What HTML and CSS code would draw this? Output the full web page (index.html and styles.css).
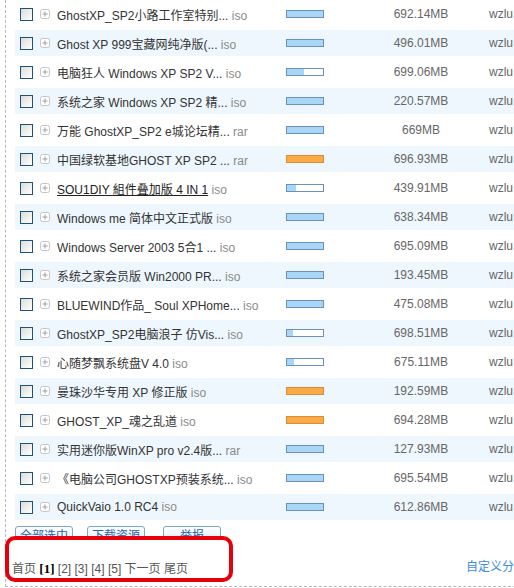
FILE: index.html
```html
<!DOCTYPE html>
<html>
<head>
  <meta charset="utf-8">
  <title>资源列表</title>
  <link rel="stylesheet" href="styles.css">
</head>
<body>
  <div class="panel">
    <ul class="file-list">
      <li class="file-row">
        <span class="check"></span>
        <svg class="expand" width="10" height="10" viewBox="0 0 10 10"><rect x="0.5" y="0.5" width="9" height="9" rx="2" fill="#fff" stroke="#c4c4c4"/><path d="M5 2.5v5M2.5 5h5" stroke="#a0a0a0"/></svg>
        <span class="name">GhostXP_SP2小路工作室特别... <em>iso</em></span>
        <span class="bar"><span class="fill" style="width:100%"></span></span>
        <span class="size">692.14MB</span>
        <span class="user">wzlu</span>
      </li>
      <li class="file-row">
        <span class="check"></span>
        <svg class="expand" width="10" height="10" viewBox="0 0 10 10"><rect x="0.5" y="0.5" width="9" height="9" rx="2" fill="#fff" stroke="#c4c4c4"/><path d="M5 2.5v5M2.5 5h5" stroke="#a0a0a0"/></svg>
        <span class="name">Ghost XP 999宝藏网纯净版(... <em>iso</em></span>
        <span class="bar"><span class="fill" style="width:100%"></span></span>
        <span class="size">496.01MB</span>
        <span class="user">wzlu</span>
      </li>
      <li class="file-row">
        <span class="check"></span>
        <svg class="expand" width="10" height="10" viewBox="0 0 10 10"><rect x="0.5" y="0.5" width="9" height="9" rx="2" fill="#fff" stroke="#c4c4c4"/><path d="M5 2.5v5M2.5 5h5" stroke="#a0a0a0"/></svg>
        <span class="name">电脑狂人 Windows XP SP2 V... <em>iso</em></span>
        <span class="bar"><span class="fill" style="width:46%"></span></span>
        <span class="size">699.06MB</span>
        <span class="user">wzlu</span>
      </li>
      <li class="file-row">
        <span class="check"></span>
        <svg class="expand" width="10" height="10" viewBox="0 0 10 10"><rect x="0.5" y="0.5" width="9" height="9" rx="2" fill="#fff" stroke="#c4c4c4"/><path d="M5 2.5v5M2.5 5h5" stroke="#a0a0a0"/></svg>
        <span class="name">系统之家 Windows XP SP2 精... <em>iso</em></span>
        <span class="bar"><span class="fill" style="width:100%"></span></span>
        <span class="size">220.57MB</span>
        <span class="user">wzlu</span>
      </li>
      <li class="file-row">
        <span class="check"></span>
        <svg class="expand" width="10" height="10" viewBox="0 0 10 10"><rect x="0.5" y="0.5" width="9" height="9" rx="2" fill="#fff" stroke="#c4c4c4"/><path d="M5 2.5v5M2.5 5h5" stroke="#a0a0a0"/></svg>
        <span class="name">万能 GhostXP_SP2 e城论坛精... <em>rar</em></span>
        <span class="bar"><span class="fill" style="width:100%"></span></span>
        <span class="size">669MB</span>
        <span class="user">wzlu</span>
      </li>
      <li class="file-row">
        <span class="check"></span>
        <svg class="expand" width="10" height="10" viewBox="0 0 10 10"><rect x="0.5" y="0.5" width="9" height="9" rx="2" fill="#fff" stroke="#c4c4c4"/><path d="M5 2.5v5M2.5 5h5" stroke="#a0a0a0"/></svg>
        <span class="name">中国绿软基地GHOST XP SP2 ... <em>rar</em></span>
        <span class="bar hot"><span class="fill" style="width:100%"></span></span>
        <span class="size">696.93MB</span>
        <span class="user">wzlu</span>
      </li>
      <li class="file-row">
        <span class="check"></span>
        <svg class="expand" width="10" height="10" viewBox="0 0 10 10"><rect x="0.5" y="0.5" width="9" height="9" rx="2" fill="#fff" stroke="#c4c4c4"/><path d="M5 2.5v5M2.5 5h5" stroke="#a0a0a0"/></svg>
        <span class="name"><a href="#">SOU1DIY 組件叠加版 4 IN 1</a> <em>iso</em></span>
        <span class="bar"><span class="fill" style="width:24%"></span></span>
        <span class="size">439.91MB</span>
        <span class="user">wzlu</span>
      </li>
      <li class="file-row">
        <span class="check"></span>
        <svg class="expand" width="10" height="10" viewBox="0 0 10 10"><rect x="0.5" y="0.5" width="9" height="9" rx="2" fill="#fff" stroke="#c4c4c4"/><path d="M5 2.5v5M2.5 5h5" stroke="#a0a0a0"/></svg>
        <span class="name">Windows me 简体中文正式版 <em>iso</em></span>
        <span class="bar"><span class="fill" style="width:100%"></span></span>
        <span class="size">638.34MB</span>
        <span class="user">wzlu</span>
      </li>
      <li class="file-row">
        <span class="check"></span>
        <svg class="expand" width="10" height="10" viewBox="0 0 10 10"><rect x="0.5" y="0.5" width="9" height="9" rx="2" fill="#fff" stroke="#c4c4c4"/><path d="M5 2.5v5M2.5 5h5" stroke="#a0a0a0"/></svg>
        <span class="name">Windows Server 2003 5合1 ... <em>iso</em></span>
        <span class="bar"><span class="fill" style="width:100%"></span></span>
        <span class="size">695.09MB</span>
        <span class="user">wzlu</span>
      </li>
      <li class="file-row">
        <span class="check"></span>
        <svg class="expand" width="10" height="10" viewBox="0 0 10 10"><rect x="0.5" y="0.5" width="9" height="9" rx="2" fill="#fff" stroke="#c4c4c4"/><path d="M5 2.5v5M2.5 5h5" stroke="#a0a0a0"/></svg>
        <span class="name">系统之家会员版 Win2000 PR... <em>iso</em></span>
        <span class="bar"><span class="fill" style="width:100%"></span></span>
        <span class="size">193.45MB</span>
        <span class="user">wzlu</span>
      </li>
      <li class="file-row">
        <span class="check"></span>
        <svg class="expand" width="10" height="10" viewBox="0 0 10 10"><rect x="0.5" y="0.5" width="9" height="9" rx="2" fill="#fff" stroke="#c4c4c4"/><path d="M5 2.5v5M2.5 5h5" stroke="#a0a0a0"/></svg>
        <span class="name">BLUEWIND作品_ Soul XPHome... <em>iso</em></span>
        <span class="bar"><span class="fill" style="width:100%"></span></span>
        <span class="size">475.08MB</span>
        <span class="user">wzlu</span>
      </li>
      <li class="file-row">
        <span class="check"></span>
        <svg class="expand" width="10" height="10" viewBox="0 0 10 10"><rect x="0.5" y="0.5" width="9" height="9" rx="2" fill="#fff" stroke="#c4c4c4"/><path d="M5 2.5v5M2.5 5h5" stroke="#a0a0a0"/></svg>
        <span class="name">GhostXP_SP2电脑浪子 仿Vis... <em>iso</em></span>
        <span class="bar"><span class="fill" style="width:16%"></span></span>
        <span class="size">698.51MB</span>
        <span class="user">wzlu</span>
      </li>
      <li class="file-row">
        <span class="check"></span>
        <svg class="expand" width="10" height="10" viewBox="0 0 10 10"><rect x="0.5" y="0.5" width="9" height="9" rx="2" fill="#fff" stroke="#c4c4c4"/><path d="M5 2.5v5M2.5 5h5" stroke="#a0a0a0"/></svg>
        <span class="name">心随梦飘系统盘V 4.0 <em>iso</em></span>
        <span class="bar"><span class="fill" style="width:20%"></span></span>
        <span class="size">675.11MB</span>
        <span class="user">wzlu</span>
      </li>
      <li class="file-row">
        <span class="check"></span>
        <svg class="expand" width="10" height="10" viewBox="0 0 10 10"><rect x="0.5" y="0.5" width="9" height="9" rx="2" fill="#fff" stroke="#c4c4c4"/><path d="M5 2.5v5M2.5 5h5" stroke="#a0a0a0"/></svg>
        <span class="name">曼珠沙华专用 XP 修正版 <em>iso</em></span>
        <span class="bar hot"><span class="fill" style="width:100%"></span></span>
        <span class="size">192.59MB</span>
        <span class="user">wzlu</span>
      </li>
      <li class="file-row">
        <span class="check"></span>
        <svg class="expand" width="10" height="10" viewBox="0 0 10 10"><rect x="0.5" y="0.5" width="9" height="9" rx="2" fill="#fff" stroke="#c4c4c4"/><path d="M5 2.5v5M2.5 5h5" stroke="#a0a0a0"/></svg>
        <span class="name">GHOST_XP_魂之乱道 <em>iso</em></span>
        <span class="bar hot"><span class="fill" style="width:100%"></span></span>
        <span class="size">694.28MB</span>
        <span class="user">wzlu</span>
      </li>
      <li class="file-row">
        <span class="check"></span>
        <svg class="expand" width="10" height="10" viewBox="0 0 10 10"><rect x="0.5" y="0.5" width="9" height="9" rx="2" fill="#fff" stroke="#c4c4c4"/><path d="M5 2.5v5M2.5 5h5" stroke="#a0a0a0"/></svg>
        <span class="name">实用迷你版WinXP pro v2.4版... <em>rar</em></span>
        <span class="bar"><span class="fill" style="width:100%"></span></span>
        <span class="size">127.93MB</span>
        <span class="user">wzlu</span>
      </li>
      <li class="file-row">
        <span class="check"></span>
        <svg class="expand" width="10" height="10" viewBox="0 0 10 10"><rect x="0.5" y="0.5" width="9" height="9" rx="2" fill="#fff" stroke="#c4c4c4"/><path d="M5 2.5v5M2.5 5h5" stroke="#a0a0a0"/></svg>
        <span class="name">《电脑公司GHOSTXP预装系统... <em>iso</em></span>
        <span class="bar"><span class="fill" style="width:100%"></span></span>
        <span class="size">695.54MB</span>
        <span class="user">wzlu</span>
      </li>
      <li class="file-row">
        <span class="check"></span>
        <svg class="expand" width="10" height="10" viewBox="0 0 10 10"><rect x="0.5" y="0.5" width="9" height="9" rx="2" fill="#fff" stroke="#c4c4c4"/><path d="M5 2.5v5M2.5 5h5" stroke="#a0a0a0"/></svg>
        <span class="name">QuickVaio 1.0 RC4 <em>iso</em></span>
        <span class="bar"><span class="fill" style="width:100%"></span></span>
        <span class="size">612.86MB</span>
        <span class="user">wzlu</span>
      </li>
    </ul>

    <div class="actions">
      <button class="btn">全部选中</button>
      <button class="btn">下载资源</button>
      <button class="btn btn-wide">举报</button>
    </div>

    <div class="pager">
      <div class="mark"></div>
      <span class="pages">首页 <b>[1]</b> [2] [3] [4] [5] 下一页 尾页</span>
      <a class="custom" href="#">自定义分类</a>
    </div>
  </div>
</body>
</html>
```

FILE: styles.css
```css
body {
  margin: 0;
  font-family: "Liberation Sans", "Noto Sans CJK SC", sans-serif;
  font-size: 12px;
  color: #333;
  background-color: #fff;
  overflow: hidden;
}

.panel {
  margin-left: 5px;
  width: 540px;
  height: 586px;
  border-left: 1px dashed #b5b5b5;
  border-bottom: 1px dashed #b5b5b5;
}

.file-list {
  list-style: none;
  margin: 0;
  padding: 1px 0 0 9px;
}

.file-row {
  display: flex;
  align-items: center;
  height: 26px;
  margin-bottom: 3px;
  padding-left: 5px;
  white-space: nowrap;
}

.file-row:nth-child(even) {
  background-color: #eef7fd;
}

.check {
  width: 11px;
  height: 11px;
  border: 1px solid #1c5180;
  background: linear-gradient(135deg, #dcdcd6, #ffffff);
  margin-right: 7px;
}

.expand {
  margin-right: 7px;
}

.name {
  width: 229px;
  overflow: hidden;
}

.name em {
  font-style: normal;
  color: #8a8a8a;
}

.name a {
  color: #222;
  text-decoration: underline;
}

.bar {
  width: 36px;
  height: 6px;
  border: 1px solid #6b90bb;
  background-color: #fff;
  display: flex;
}

.bar .fill {
  background-color: #a9d5f7;
}

.bar.hot {
  border-color: #d88d3a;
}

.bar.hot .fill {
  background-color: #fbaa45;
}

.size {
  width: 80px;
  margin-left: 57px;
  text-align: center;
  color: #666;
}

.user {
  margin-left: 28px;
  color: #666;
}

.actions {
  display: flex;
  height: 12px;
  overflow: hidden;
  margin: 6px 0 0 9px;
}

.btn {
  width: 58px;
  height: 20px;
  padding: 0;
  margin-right: 14px;
  border: 1px solid #7da6cf;
  border-radius: 3px;
  background: linear-gradient(#ffffff, #d5e7f7);
  color: #2763a8;
  font-family: "Liberation Sans", "Noto Sans CJK SC", sans-serif;
  font-size: 12px;
  line-height: 18px;
}

.btn-wide {
  margin-left: 4px;
}

.pager {
  position: relative;
  display: flex;
  align-items: center;
  height: 43px;
  padding: 0 0 0 6px;
}

.mark {
  position: absolute;
  left: -1px;
  top: -2px;
  width: 228px;
  height: 46px;
  box-sizing: border-box;
  border: 4px solid #e6000b;
  border-radius: 10px;
}

.pages {
  color: #555;
  margin-top: 16px;
}

.pages b {
  color: #000;
  font-family: "Liberation Serif", serif;
  font-size: 13px;
}

.custom {
  color: #3a8ddb;
  text-decoration: none;
  margin-left: auto;
  margin-right: 20px;
  margin-top: 12px;
}
```
